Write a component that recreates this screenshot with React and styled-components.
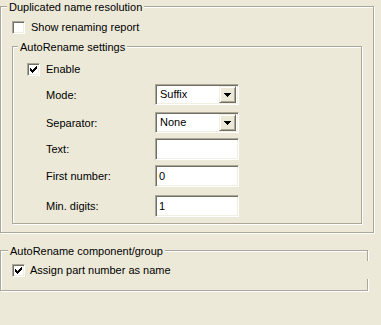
import React from 'react';
import styled, { createGlobalStyle, css } from 'styled-components';

const Global = createGlobalStyle`
  html, body { margin: 0; padding: 0; background: #ECE9D8; }
  body {
    font-family: "Liberation Sans", Arial, sans-serif;
    font-size: 11px;
    color: #000;
  }
`;

const sunken = css`
  box-sizing: border-box;
  border: 1px solid;
  border-color: #ACA899 #fff #fff #ACA899;
  box-shadow: inset 1px 1px 0 #716F64, inset -1px -1px 0 #F1EFE2;
  background: #fff;
`;

const Page = styled.div`
  width: 381px;
  height: 325px;
  box-sizing: border-box;
  padding-top: 6px;
  display: flex;
  flex-direction: column;
`;

const GroupBox = styled.div`
  position: relative;
  box-sizing: border-box;
  width: ${p => p.$w}px;
  height: ${p => p.$h}px;
  margin: ${p => p.$mt || 0}px 0 0 ${p => p.$ml || 0}px;
  padding-left: ${p => p.$pl}px;
  border: 1px solid #ACA899;
  box-shadow: inset 1px 1px 0 #fff, 1px 1px 0 #fff;
  display: flex;
  flex-direction: column;
  flex-shrink: 0;
  ${p => p.$glitch && css`
    &::after {
      content: '';
      position: absolute;
      right: -2px;
      top: 10px;
      width: 3px;
      height: 18px;
      background: #ECE9D8;
    }
  `}
`;

const Legend = styled.div`
  align-self: flex-start;
  background: #ECE9D8;
  line-height: 13px;
  margin: -6px 0 0 ${p => p.$x}px;
  padding: 0 2px;
  white-space: nowrap;
`;

const CheckRow = styled.label`
  display: flex;
  align-items: center;
  gap: ${p => p.$gap}px;
  height: 13px;
  margin-top: ${p => p.$mt}px;
  line-height: 13px;
  white-space: nowrap;
`;

const Box = styled.span`
  ${sunken};
  width: 13px;
  height: 13px;
  display: flex;
  align-items: center;
  justify-content: center;
  flex-shrink: 0;
`;

const Form = styled.div`
  display: grid;
  grid-template-columns: 109px 84px;
  margin: ${p => p.$mt}px 0 0 19px;
`;

const FieldLabel = styled.div`
  display: flex;
  align-items: center;
  margin-top: ${p => p.$mt || 0}px;
  white-space: nowrap;
`;

const Slot = styled.div`
  margin-top: ${p => p.$mt || 0}px;
  height: ${p => p.$h}px;
`;

const Combo = styled.div`
  ${sunken};
  width: 84px;
  height: 21px;
  padding: 2px;
  display: flex;
  align-items: center;
`;

const ComboValue = styled.span`
  flex: 1;
  padding-left: 2px;
  line-height: 17px;
`;

const DropButton = styled.span`
  box-sizing: border-box;
  width: 17px;
  height: 17px;
  border: 1px solid;
  border-color: #F1EFE2 #716F64 #716F64 #F1EFE2;
  box-shadow: inset 1px 1px 0 #fff, inset -1px -1px 0 #ACA899;
  background: #ECE9D8;
  display: flex;
  align-items: center;
  justify-content: center;
`;

const Edit = styled.div`
  ${sunken};
  width: 84px;
  height: ${p => p.$h}px;
  padding: 0 3px;
  display: flex;
  align-items: center;
  line-height: 13px;
`;

const CheckMark = () => (
  <svg width="7" height="7" viewBox="0 0 7 7" shapeRendering="crispEdges">
    <path
      fill="#000"
      d="M6 0h1v3h-1zM5 1h1v3h-1zM4 2h1v3h-1zM0 2h1v3h-1zM1 3h1v3h-1zM2 4h1v3h-1zM3 3h1v3h-1z"
    />
  </svg>
);

const Arrow = () => (
  <svg width="7" height="4" viewBox="0 0 7 4" shapeRendering="crispEdges">
    <path fill="#000" d="M0 0h7v1h-7zM1 1h5v1h-5zM2 2h3v1h-3zM3 3h1v1h-1z" />
  </svg>
);

const Check = ({ checked, children, gap, mt }) => (
  <CheckRow $gap={gap} $mt={mt}>
    <Box>{checked && <CheckMark />}</Box>
    <span>{children}</span>
  </CheckRow>
);

const ComboBox = ({ value }) => (
  <Combo>
    <ComboValue>{value}</ComboValue>
    <DropButton><Arrow /></DropButton>
  </Combo>
);

const rows = [
  { label: 'Mode:', kind: 'combo', value: 'Suffix', mt: 0, h: 21 },
  { label: 'Separator:', kind: 'combo', value: 'None', mt: 7, h: 21 },
  { label: 'Text:', kind: 'edit', value: '', mt: 5, h: 22 },
  { label: 'First number:', kind: 'edit', value: '0', mt: 5, h: 22 },
  { label: 'Min. digits:', kind: 'edit', value: '1', mt: 8, h: 22 },
];

export default function App() {
  return (
    <>
      <Global />
      <Page>
        <GroupBox $w={374} $h={227} $pl={11}>
          <Legend $x={-5}>Duplicated name resolution</Legend>
          <Check gap={6} mt={7}>Show renaming report</Check>
          <GroupBox $w={350} $h={178} $pl={14} $mt={12}>
            <Legend $x={-9}>AutoRename settings</Legend>
            <Check checked gap={6} mt={9}>Enable</Check>
            <Form $mt={8}>
              {rows.map(r => (
                <React.Fragment key={r.label}>
                  <FieldLabel $mt={r.mt}>{r.label}</FieldLabel>
                  <Slot $mt={r.mt} $h={r.h}>
                    {r.kind === 'combo' ? (
                      <ComboBox value={r.value} />
                    ) : (
                      <Edit $h={r.h}>{r.value}</Edit>
                    )}
                  </Slot>
                </React.Fragment>
              ))}
            </Form>
          </GroupBox>
        </GroupBox>
        <GroupBox $w={368} $h={41} $pl={11} $mt={17} $glitch>
          <Legend $x={-4}>AutoRename component/group</Legend>
          <Check checked gap={5} mt={6}>Assign part number as name</Check>
        </GroupBox>
      </Page>
    </>
  );
}
